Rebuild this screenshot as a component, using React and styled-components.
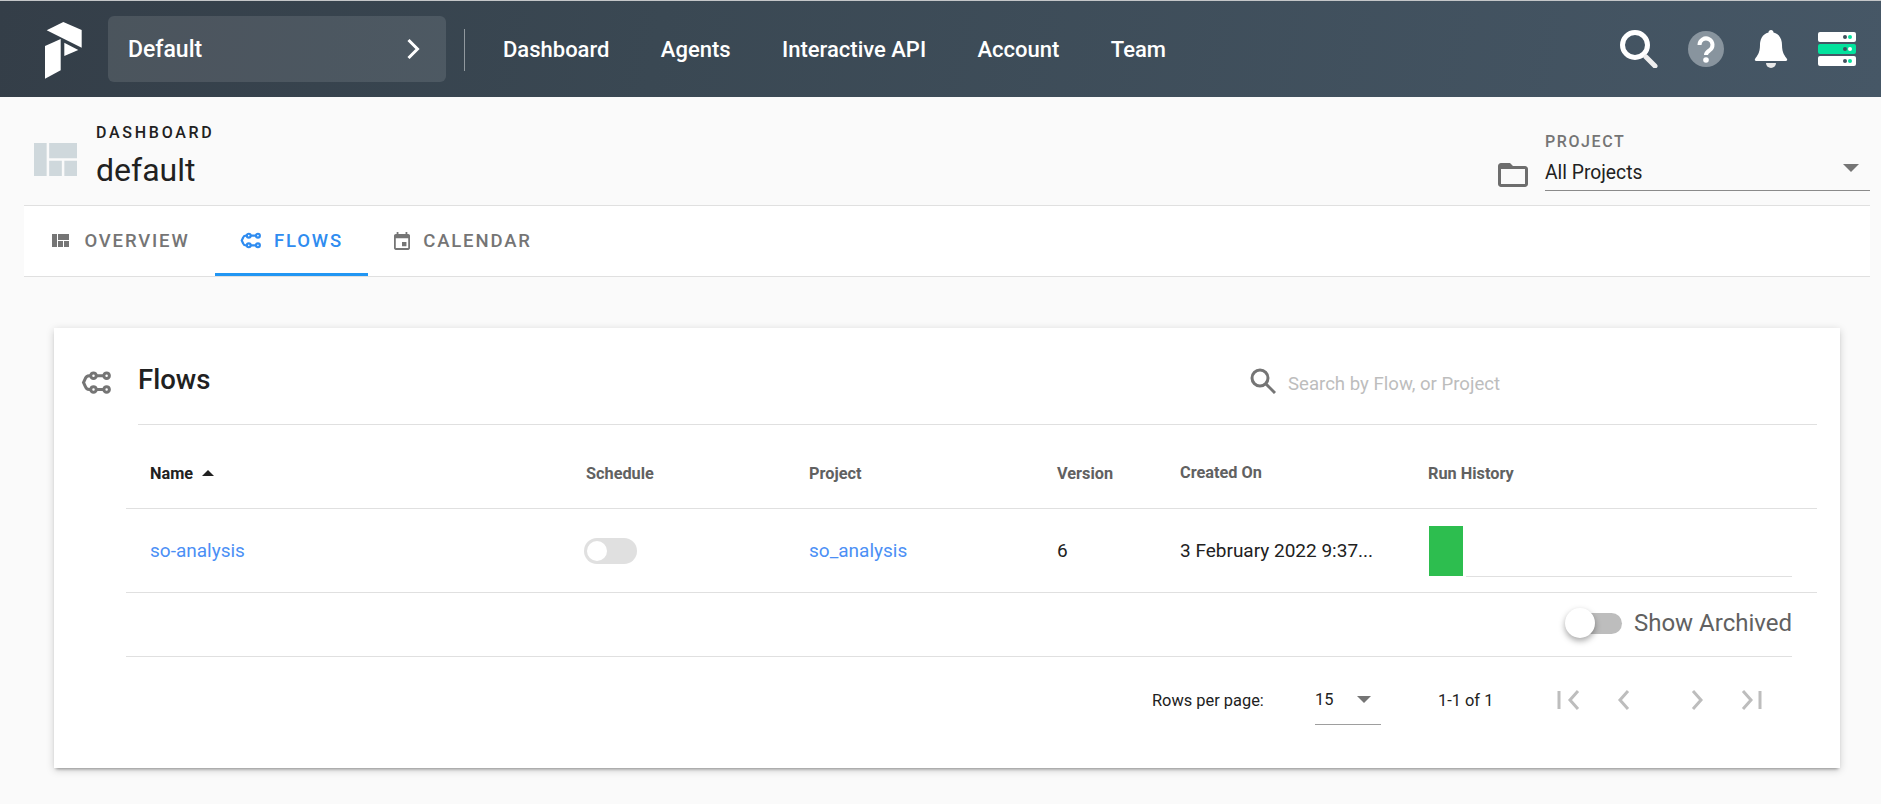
import React from 'react';
import styled, { createGlobalStyle } from 'styled-components';

const Global = createGlobalStyle`
  html, body { margin: 0; padding: 0; background: #fafafa; }
  body { font-family: Roboto, "Noto Sans", sans-serif; color: #212121; }
  * { box-sizing: border-box; }
`;

const Page = styled.div`
  width: 1881px;
  height: 804px;
  overflow: hidden;
  background: #fafafa;
`;

const Header = styled.header`
  height: 97px;
  border-top: 1px solid #c4c6c8;
  background: linear-gradient(100deg, #343e48 0%, #3a4853 35%, #465766 100%);
  display: flex;
  align-items: center;
  padding-left: 40px;
  padding-right: 25px;
  color: #fff;
`;

const Logo = styled.svg`
  width: 50px;
  height: 60px;
  flex: none;
  margin-right: 18px;
  margin-top: 1px;
`;

const Switcher = styled.div`
  width: 338px;
  height: 66px;
  margin-bottom: 1px;
  border-radius: 6px;
  background: rgba(255, 255, 255, 0.11);
  display: flex;
  align-items: center;
  justify-content: space-between;
  padding: 0 26px 0 20px;
  font-size: 23px;
  font-weight: 500;
`;

const SwitcherName = styled.span`
  padding-top: 2px;
`;

const Divider = styled.div`
  width: 1px;
  height: 42px;
  margin: 2px 38px 0 18px;
  background: rgba(255, 255, 255, 0.45);
`;

const Nav = styled.nav`
  display: flex;
  gap: 51.4px;
  font-size: 22px;
  font-weight: 500;
`;

const HeaderIcons = styled.div`
  margin-left: auto;
  display: flex;
  align-items: center;
  gap: 30px;
`;

const SubHeader = styled.div`
  height: 108px;
  display: flex;
  justify-content: space-between;
  padding: 0 11px 0 34px;
`;

const TitleGroup = styled.div`
  display: flex;
  align-items: flex-start;
`;

const QuiltIcon = styled.svg`
  width: 43px;
  height: 33px;
  margin-top: 46px;
  margin-right: 19px;
  fill: #cfd8dc;
`;

const TitleText = styled.div`
  padding-top: 27px;
`;

const Overline = styled.div`
  font-size: 16px;
  line-height: 18px;
  font-weight: 500;
  letter-spacing: 0.17em;
  color: #212121;
`;

const PageTitle = styled.h1`
  margin: 7px 0 0;
  font-size: 32px;
  line-height: 42px;
  font-weight: 400;
  color: #212121;
`;

const ProjectPicker = styled.div`
  display: flex;
  align-items: flex-start;
`;

const FolderIcon = styled.svg`
  width: 30px;
  height: 24px;
  margin: 66px 17px 0 0;
  fill: #6d6d6d;
`;

const ProjectField = styled.div`
  width: 325px;
  padding-top: 36px;
`;

const FieldLabel = styled.div`
  font-size: 16px;
  line-height: 18px;
  font-weight: 500;
  letter-spacing: 0.1em;
  color: #757575;
`;

const FieldValue = styled.div`
  height: 40px;
  display: flex;
  align-items: center;
  justify-content: space-between;
  border-bottom: 1px solid #8a8a8a;
  padding: 3px 11px 0 0;
  font-size: 19.3px;
  color: #212121;
`;

const Caret = styled.span`
  width: 0;
  height: 0;
  border-left: ${p => p.$size}px solid transparent;
  border-right: ${p => p.$size}px solid transparent;
  border-top: ${p => p.$size}px solid #757575;
  margin-bottom: ${p => p.$lift || 0}px;
`;

const SortCaret = styled.span`
  width: 0;
  height: 0;
  border-left: 6px solid transparent;
  border-right: 6px solid transparent;
  border-bottom: 6px solid #212121;
`;

const Tabs = styled.div`
  height: 72px;
  margin: 0 11px 0 24px;
  background: #fff;
  border-top: 1px solid #e0e0e0;
  border-bottom: 1px solid #e0e0e0;
  display: flex;
`;

const Tab = styled.div`
  width: ${p => p.$width}px;
  display: flex;
  align-items: center;
  justify-content: center;
  gap: ${p => p.$gap}px;
  padding: 2px 0 0 ${p => p.$inset || 0}px;
  font-size: 18.5px;
  font-weight: 500;
  letter-spacing: 0.1em;
  color: ${p => (p.$active ? '#2f8cf0' : '#757575')};
  border-bottom: 3px solid ${p => (p.$active ? '#2196f3' : 'transparent')};
`;

const TabIcon = styled.svg`
  width: ${p => p.$w || 24}px;
  height: ${p => p.$h || 24}px;
  fill: currentColor;
  flex: none;
`;

const Card = styled.section`
  width: 1786px;
  height: 440px;
  margin: 51px 0 0 54px;
  background: #fff;
  box-shadow: 0 3px 3px -2px rgba(0, 0, 0, 0.35), 0 2px 8px rgba(0, 0, 0, 0.18);
`;

const CardHead = styled.div`
  height: 97px;
  display: flex;
  padding: 0 23px 0 27px;
`;

const FlowGlyph = styled.svg`
  width: ${p => p.$w}px;
  height: ${p => p.$h}px;
  fill: none;
  stroke: currentColor;
  stroke-width: ${p => p.$stroke};
  flex: none;
`;

const CardIconSlot = styled.div`
  width: 57px;
  padding-top: 43px;
  color: #757575;
`;

const TitleBar = styled.div`
  flex: 1;
  display: flex;
  align-items: center;
  justify-content: space-between;
  border-bottom: 1px solid #e0e0e0;
`;

const CardTitle = styled.h2`
  margin: 6px 0 0;
  font-size: 27.5px;
  font-weight: 500;
  color: #212121;
`;

const SearchBox = styled.div`
  width: 567px;
  display: flex;
  align-items: center;
  gap: 12px;
  font-size: 18.6px;
  color: #bdbdbd;
  padding-top: 10px;
`;

const Placeholder = styled.span`
  padding-top: 6px;
`;

const Table = styled.div`
  margin: 0 23px 0 72px;
`;

const Row = styled.div`
  height: 84px;
  display: grid;
  grid-template-columns: 436px 223px 248px 123px 248px 1fr;
  align-items: center;
  border-bottom: 1px solid #e0e0e0;
`;

const HeadCell = styled.div`
  padding-left: 24px;
  padding-top: ${p => p.$shift}px;
  font-size: 16.3px;
  font-weight: 700;
  color: ${p => (p.$sorted ? '#212121' : '#616161')};
  display: flex;
  align-items: center;
  gap: 9px;
`;

const Cell = styled.div`
  padding-left: 24px;
  font-size: 19px;
  color: #212121;
  white-space: nowrap;
`;

const LinkText = styled.a`
  color: #4b8ff5;
`;

const ScheduleToggle = styled.div`
  width: 53px;
  height: 26px;
  margin-left: -2px;
  border-radius: 13px;
  background: #e0e0e0;
  padding: 3px;
  &::before {
    content: '';
    display: block;
    width: 20px;
    height: 20px;
    border-radius: 50%;
    background: #fff;
  }
`;

const RunHistory = styled.div`
  display: flex;
  align-items: flex-end;
  width: 363px;
  margin-left: 25px;
`;

const RunBar = styled.div`
  width: 34px;
  height: 50px;
  background: #2dbe4f;
  flex: none;
`;

const Baseline = styled.div`
  flex: 1;
  height: 1px;
  margin-left: 3px;
  margin-bottom: -1px;
  background: #e0e0e0;
`;

const ArchiveRow = styled.div`
  height: 64px;
  margin-right: 25px;
  display: flex;
  align-items: center;
  justify-content: flex-end;
  gap: 12px;
  padding-bottom: 4px;
  border-bottom: 1px solid #e0e0e0;
`;

const ArchiveSwitch = styled.div`
  position: relative;
  width: 47px;
  height: 21px;
  margin-top: 1px;
  border-radius: 11px;
  background: #bdbdbd;
  &::before {
    content: '';
    position: absolute;
    left: -10px;
    top: -5px;
    width: 30px;
    height: 30px;
    border-radius: 50%;
    background: #fff;
    box-shadow: 0 3px 6px rgba(0, 0, 0, 0.35);
  }
`;

const ArchiveLabel = styled.span`
  font-size: 24px;
  color: #616161;
`;

const Pagination = styled.div`
  height: 109px;
  display: flex;
  align-items: center;
  justify-content: flex-end;
  padding: 0 62px 23px 0;
  font-size: 16.4px;
  color: #212121;
  margin-right: -23px;
`;

const RowsLabel = styled.span`
  width: 163px;
`;

const RowsSelect = styled.div`
  width: 66px;
  height: 50px;
  display: flex;
  align-items: center;
  justify-content: space-between;
  padding: 0 10px 0 0;
  border-bottom: 1px solid #9e9e9e;
`;

const Count = styled.span`
  width: 104px;
  margin-left: 57px;
`;

const PagerGroup = styled.div`
  display: flex;
  & + & {
    margin-left: 20px;
  }
`;

const PagerIcon = styled.svg`
  width: 54px;
  height: 24px;
  fill: none;
  stroke: #bdbdbd;
  stroke-width: 3;
`;

const FlowsIcon = ({ w = 24, h = 18, stroke = 2 }) => (
  <FlowGlyph $w={w} $h={h} $stroke={stroke} viewBox="0 0 24 18">
    <circle cx="10" cy="3.5" r="2.2" />
    <circle cx="20.5" cy="3.5" r="2.2" />
    <circle cx="10" cy="14.5" r="2.2" />
    <circle cx="20.5" cy="14.5" r="2.2" />
    <path d="M12.2 3.5h6.1M12.2 14.5h6.1M7.8 3.5H6.5Q4.3 3.5 3.6 5.6L2 9l1.6 3.4q.7 2.1 2.9 2.1h1.3" />
  </FlowGlyph>
);

const PagerButton = ({ d }) => (
  <PagerIcon viewBox="0 0 54 24">
    <path d={d} />
  </PagerIcon>
);

export default function App() {
  return (
    <Page>
      <Global />
      <Header>
        <Logo viewBox="0 0 50 60">
          <g fill="#fff" transform="translate(-40 -19)">
            <polygon points="46.7,29.3 63.3,21 81.7,29 81.7,46.7" />
            <polygon points="64.3,41.7 78.3,49 64.3,55" />
            <polygon points="45,45 60.7,38 60.7,69.3 45,77.7" />
          </g>
        </Logo>
        <Switcher>
          <SwitcherName>Default</SwitcherName>
          <svg width="14" height="22" viewBox="0 0 14 22" fill="none" stroke="#fff" strokeWidth="3">
            <path d="M2.5 2l9 9-9 9" />
          </svg>
        </Switcher>
        <Divider />
        <Nav>
          <span>Dashboard</span>
          <span>Agents</span>
          <span>Interactive API</span>
          <span>Account</span>
          <span>Team</span>
        </Nav>
        <HeaderIcons>
          <svg width="38" height="38" viewBox="0 0 38 38" fill="none">
            <circle cx="15" cy="15" r="12.5" stroke="#fff" strokeWidth="5" />
            <path d="M26 27l9 9" stroke="#eee" strokeWidth="5" strokeLinecap="round" />
          </svg>
          <svg width="36" height="36" viewBox="0 0 36 36">
            <circle cx="18" cy="18" r="18" fill="#88949e" />
            <path d="M11.500 14a6.500 6.500 0 1 1 10 5.400c-2 1.300-3.500 2.200-3.500 4.600" fill="none" stroke="#fff" strokeWidth="4" />
            <circle cx="18" cy="29" r="2.800" fill="#fff" />
          </svg>
          <svg width="34" height="38" viewBox="0 0 34 38">
            <path fill="#fff" d="M17 0c1.500 0 2.500 1 2.500 2.500C26 4 28 10 28 15c0 8 3 11 5 14 .5 1 0 2-1 2H2c-1 0-1.500-1-1-2 2-3 5-6 5-14 0-5 2-11 8.500-12.500C14.500 1 15.500 0 17 0z" />
            <path fill="#e8e8e8" d="M12 33h10a5 5 0 0 1-10 0z" />
          </svg>
          <svg width="38" height="34" viewBox="0 0 38 34">
            <rect x="0" y="0" width="38" height="10" rx="2" fill="#fff" />
            <circle cx="27" cy="5" r="2" fill="#3f4f5c" />
            <circle cx="32" cy="5" r="2" fill="#03e29d" />
            <rect x="0" y="12" width="38" height="10" rx="2" fill="#03e29d" />
            <circle cx="27" cy="17" r="2" fill="#3f4f5c" />
            <circle cx="32" cy="17" r="2" fill="#fff" />
            <rect x="0" y="24" width="38" height="10" rx="2" fill="#fff" />
            <circle cx="27" cy="29" r="2" fill="#3f4f5c" />
            <circle cx="32" cy="29" r="2" fill="#03e29d" />
          </svg>
        </HeaderIcons>
      </Header>

      <SubHeader>
        <TitleGroup>
          <QuiltIcon viewBox="4 5 17 13">
            <path d="M10 18h5v-6h-5v6zm-6 0h5V5H4v13zm12 0h5v-6h-5v6zM10 5v6h11V5H10z" />
          </QuiltIcon>
          <TitleText>
            <Overline>DASHBOARD</Overline>
            <PageTitle>default</PageTitle>
          </TitleText>
        </TitleGroup>
        <ProjectPicker>
          <FolderIcon viewBox="2 4 20 16">
            <path d="M20 6h-8l-2-2H4c-1.100 0-1.990.9-1.990 2L2 18c0 1.100.9 2 2 2h16c1.100 0 2-.9 2-2V8c0-1.100-.9-2-2-2zm0 12H4V8h16v10z" />
          </FolderIcon>
          <ProjectField>
            <FieldLabel>PROJECT</FieldLabel>
            <FieldValue>
              <span>All Projects</span>
              <Caret $size={8} $lift={8} />
            </FieldValue>
          </ProjectField>
        </ProjectPicker>
      </SubHeader>

      <Tabs>
        <Tab $width={191} $gap={15} $inset={3}>
          <TabIcon $w={17} $h={13} viewBox="4 5 17 13">
            <path d="M10 18h5v-6h-5v6zm-6 0h5V5H4v13zm12 0h5v-6h-5v6zM10 5v6h11V5H10z" />
          </TabIcon>
          OVERVIEW
        </Tab>
        <Tab $width={153} $gap={13} $active>
          <FlowsIcon w={21} h={17} stroke={2.5} />
          FLOWS
        </Tab>
        <Tab $width={190} $gap={13}>
          <TabIcon $w={16} $h={18} viewBox="3 1 18 20">
            <path d="M17 12h-5v5h5v-5zM16 1v2H8V1H6v2H5c-1.110 0-1.990.9-1.990 2L3 19c0 1.100.89 2 2 2h14c1.100 0 2-.9 2-2V5c0-1.100-.9-2-2-2h-1V1h-2zm3 18H5V8h14v11z" />
          </TabIcon>
          CALENDAR
        </Tab>
      </Tabs>

      <Card>
        <CardHead>
          <CardIconSlot>
            <FlowsIcon w={30} h={23} stroke={2.4} />
          </CardIconSlot>
          <TitleBar>
            <CardTitle>Flows</CardTitle>
            <SearchBox>
              <svg width="26" height="26" viewBox="0 0 26 26" fill="none" stroke="#757575" strokeWidth="3">
                <circle cx="10" cy="10" r="8" />
                <path d="M16 16l9 9" />
              </svg>
              <Placeholder>Search by Flow, or Project</Placeholder>
            </SearchBox>
          </TitleBar>
        </CardHead>
        <Table>
          <Row>
            <HeadCell $sorted $shift={13}>
              Name
              <SortCaret />
            </HeadCell>
            <HeadCell $shift={13}>Schedule</HeadCell>
            <HeadCell $shift={13}>Project</HeadCell>
            <HeadCell $shift={13}>Version</HeadCell>
            <HeadCell $shift={12}>Created On</HeadCell>
            <HeadCell $shift={13}>Run History</HeadCell>
          </Row>
          <Row>
            <Cell><LinkText>so-analysis</LinkText></Cell>
            <Cell><ScheduleToggle /></Cell>
            <Cell><LinkText>so_analysis</LinkText></Cell>
            <Cell>6</Cell>
            <Cell>3 February 2022 9:37...</Cell>
            <RunHistory>
              <RunBar />
              <Baseline />
            </RunHistory>
          </Row>
          <ArchiveRow>
            <ArchiveSwitch />
            <ArchiveLabel>Show Archived</ArchiveLabel>
          </ArchiveRow>
          <Pagination>
            <RowsLabel>Rows per page:</RowsLabel>
            <RowsSelect>
              <span>15</span>
              <Caret $size={7} />
            </RowsSelect>
            <Count>1-1 of 1</Count>
            <PagerGroup>
              <PagerButton d="M17 3v18M36 3l-8 9 8 9" />
              <PagerButton d="M32 3l-8 9 8 9" />
            </PagerGroup>
            <PagerGroup>
              <PagerButton d="M23 3l8 9-8 9" />
              <PagerButton d="M19 3l8 9-8 9M36 3v18" />
            </PagerGroup>
          </Pagination>
        </Table>
      </Card>
    </Page>
  );
}
